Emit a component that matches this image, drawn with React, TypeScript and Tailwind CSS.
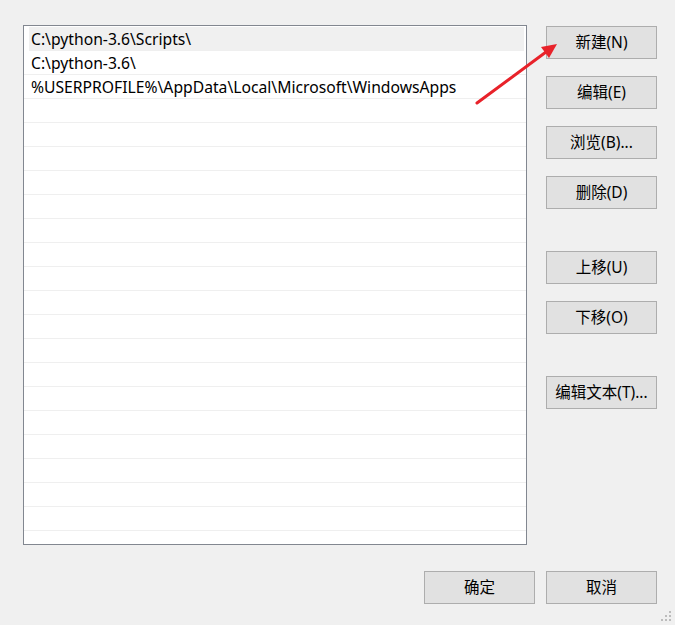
import React from 'react';

const font = { fontFamily: '"Noto Sans", "Noto Sans CJK SC", sans-serif' };

const App: React.FC = () => {
  const paths = [
    'C:\\python-3.6\\Scripts\\',
    'C:\\python-3.6\\',
    '%USERPROFILE%\\AppData\\Local\\Microsoft\\WindowsApps',
  ];
  const rows = Array.from({ length: 22 }, (_, i) => paths[i] ?? '');

  const Btn = ({ label, className = '' }: { label: string; className?: string }) => (
    <button
      className={`w-[111px] h-[33px] bg-[#e1e1e1] border border-[#adadad] text-[15.5px] text-black flex items-center justify-center ${className}`}
    >
      {label}
    </button>
  );

  return (
    <div className="relative w-[675px] h-[625px] bg-[#f0f0f0] overflow-hidden" style={font}>
      <div className="flex pt-[25px] pl-[23px]">
        {/* path list */}
        <div className="w-[504px] h-[520px] bg-white border border-[#828790] pt-[1px] overflow-hidden">
          {rows.map((text, i) => (
            <div
              key={i}
              className={`h-[24px] flex items-center pt-[2px] text-[15.7px] text-black border-b border-[#efefef] ${
                i === 0 ? 'bg-[#f0f0f0] ml-[5px] mr-[2px] pl-[2px]' : 'pl-[7px]'
              }`}
            >
              {text}
            </div>
          ))}
        </div>

        {/* right buttons */}
        <div className="ml-[19px] mt-[1px] flex flex-col">
          <Btn label="新建(N)" />
          <Btn label="编辑(E)" className="mt-[17px]" />
          <Btn label="浏览(B)..." className="mt-[17px]" />
          <Btn label="删除(D)" className="mt-[17px]" />
          <Btn label="上移(U)" className="mt-[42px]" />
          <Btn label="下移(O)" className="mt-[17px]" />
          <Btn label="编辑文本(T)..." className="mt-[42px]" />
        </div>
      </div>

      {/* bottom buttons */}
      <div className="flex justify-end gap-[11px] pr-[18px] mt-[26px]">
        <Btn label="确定" />
        <Btn label="取消" />
      </div>

      {/* red annotation arrow */}
      <svg className="absolute left-0 top-0 pointer-events-none" width="675" height="625">
        <line x1="477" y1="103" x2="546" y2="52" stroke="#e8222a" strokeWidth="3" strokeLinecap="round" />
        <polygon points="557,44 541,47 549,58" fill="#e8222a" />
      </svg>

      {/* size grip */}
      <svg className="absolute right-[3px] bottom-[3px]" width="12" height="12">
        {[
          [9, 1],
          [5, 5],
          [9, 5],
          [1, 9],
          [5, 9],
          [9, 9],
        ].map(([x, y], i) => (
          <rect key={i} x={x} y={y} width="2" height="2" fill="#bcbcbc" />
        ))}
      </svg>
    </div>
  );
};

export default App;
